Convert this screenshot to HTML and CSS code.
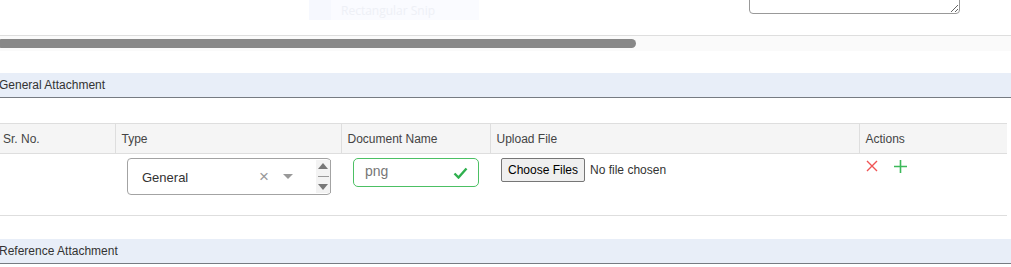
FILE: index.html
```html
<!DOCTYPE html>
<html lang="en">
<head>
    <meta charset="UTF-8">
    <title>Attachments</title>
    <link rel="stylesheet" href="styles.css">
</head>
<body>
    <div class="page">
        <div class="top-strip">
            <!-- snipping tool leftover floating over the page -->
            <div class="snip"><span class="snip-dot"></span>Rectangular Snip</div>
            <textarea class="remarks"></textarea>
        </div>
        <div class="hscroll">
            <div class="hscroll-thumb"></div>
        </div>

        <div class="section-title">General Attachment</div>
        <table class="att-table">
            <thead>
                <tr>
                    <th class="col-sr">Sr. No.</th>
                    <th class="col-type">Type</th>
                    <th class="col-doc">Document Name</th>
                    <th class="col-file">Upload File</th>
                    <th class="col-act">Actions</th>
                </tr>
            </thead>
            <tbody>
                <tr>
                    <td></td>
                    <td>
                        <div class="select">
                            <span class="select-value">General</span>
                            <span class="select-clear">&#215;</span>
                            <span class="select-caret"></span>
                            <span class="spinner">
                                <span class="spin-up"></span>
                                <span class="spin-line"></span>
                                <span class="spin-down"></span>
                            </span>
                        </div>
                    </td>
                    <td>
                        <div class="doc-input">
                            <span>png</span>
                            <svg width="15" height="12" viewBox="0 0 15 12"><path d="M1.5 6.5l4 4 8-9" fill="none" stroke="#2fb04e" stroke-width="2.4"/></svg>
                        </div>
                    </td>
                    <td>
                        <div class="file-pick">
                            <button class="file-btn">Choose Files</button>
                            <span>No file chosen</span>
                        </div>
                    </td>
                    <td>
                        <div class="actions">
                            <svg width="12" height="12" viewBox="0 0 12 12"><path d="M1 1l10 10M11 1L1 11" stroke="#f05454" stroke-width="1.4"/></svg>
                            <svg width="13" height="13" viewBox="0 0 13 13"><path d="M6.5 0v13M0 6.5h13" stroke="#3cb95a" stroke-width="1.6"/></svg>
                        </div>
                    </td>
                </tr>
            </tbody>
        </table>

        <div class="section-title ref">Reference Attachment</div>
    </div>
</body>
</html>
```

FILE: styles.css
```css
* {
    box-sizing: border-box;
}
body {
    margin: 0;
    background: #fff;
    font-family: "Liberation Sans", Arial, sans-serif;
    font-size: 12px;
    color: #333;
    overflow: hidden;
}
.page {
    margin-left: -3px;
    width: 1014px;
}
.top-strip {
    position: relative;
    height: 35px;
    display: flex;
    justify-content: flex-end;
    padding-right: 51px;
}
.snip {
    position: absolute;
    left: 312px;
    top: 0;
    width: 170px;
    height: 20px;
    display: flex;
    align-items: center;
    background: #fafbff;
    color: #eef0f6;
    font-family: "Open Sans", sans-serif;
    font-size: 12px;
}
.snip-dot {
    width: 22px;
    height: 20px;
    background: #f6f8fe;
    margin-right: 10px;
}
.remarks {
    width: 211px;
    height: 40px;
    margin-top: -26px;
    border: 1px solid #999;
    border-radius: 4px;
}
.hscroll {
    border-top: 1px solid #dedede;
    background: #fafafa;
    height: 16px;
    padding-top: 3px;
}
.hscroll-thumb {
    width: 639px;
    height: 9px;
    background: #888;
    border-radius: 5px;
}
.section-title {
    margin-top: 22px;
    height: 25px;
    line-height: 24px;
    background: #e8eef8;
    border-bottom: 1px solid #767b82;
    padding-left: 2px;
}
.section-title.ref {
    margin-top: 23px;
    padding-left: 2px;
}
.att-table {
    margin-top: 25px;
    width: 1010px;
    border-collapse: collapse;
}
.att-table th {
    height: 30px;
    background: #f5f5f5;
    border-top: 1px solid #dedede;
    border-bottom: 1px solid #dedede;
    border-left: 1px solid #dedede;
    font-weight: normal;
    text-align: left;
    padding: 0 6px;
    color: #444;
}
.att-table th:first-child {
    border-left: none;
}
.col-sr { width: 118px; }
.col-type { width: 226px; }
.col-doc { width: 149px; }
.col-file { width: 369px; }
.att-table td {
    height: 62px;
    vertical-align: top;
    border-bottom: 1px solid #dedede;
    padding: 5px 0 0 12px;
}
.select {
    position: relative;
    width: 204px;
    height: 37px;
    margin-top: -1px;
    border: 1px solid #a3a3a3;
    border-radius: 4px;
    display: flex;
    align-items: center;
    padding-left: 14px;
    font-size: 13px;
    color: #333;
}
.select-value {
    flex: 1;
    margin-top: 2px;
}
.select-clear {
    color: #999;
    font-size: 17px;
    margin-right: 14px;
}
.select-caret {
    width: 0;
    height: 0;
    border-left: 5px solid transparent;
    border-right: 5px solid transparent;
    border-top: 5px solid #999;
    margin-right: 37px;
}
.spinner {
    position: absolute;
    right: -1px;
    top: 1px;
    width: 15px;
    height: 33px;
    background: #f3f3f3;
    display: flex;
    flex-direction: column;
    align-items: center;
    justify-content: space-between;
    padding: 3px 0;
    border-right: 1px solid #a3a3a3;
}
.spin-up {
    border-left: 5px solid transparent;
    border-right: 5px solid transparent;
    border-bottom: 6px solid #777;
}
.spin-down {
    border-left: 5px solid transparent;
    border-right: 5px solid transparent;
    border-top: 6px solid #777;
}
.spin-line {
    width: 11px;
    border-top: 1px solid #999;
}
.doc-input {
    width: 126px;
    height: 29px;
    margin-top: -1px;
    border: 1px solid #4cc064;
    border-radius: 5px;
    display: flex;
    align-items: center;
    justify-content: space-between;
    padding: 0 10px 0 11px;
    font-size: 14px;
    color: #777;
}
.doc-input span {
    margin-top: -3px;
}
.file-pick {
    display: flex;
    align-items: center;
    gap: 5px;
    margin-left: -1px;
    margin-top: -1px;
}
.file-btn {
    font-family: "Liberation Sans", Arial, sans-serif;
    font-size: 12px;
    height: 24px;
    padding: 0 6px;
    background: #efefef;
    border: 1px solid #767676;
    border-radius: 2px;
    color: #000;
}
.actions {
    display: flex;
    gap: 16px;
    padding: 1px 0 0 0;
    margin-left: -5px;
}
```
